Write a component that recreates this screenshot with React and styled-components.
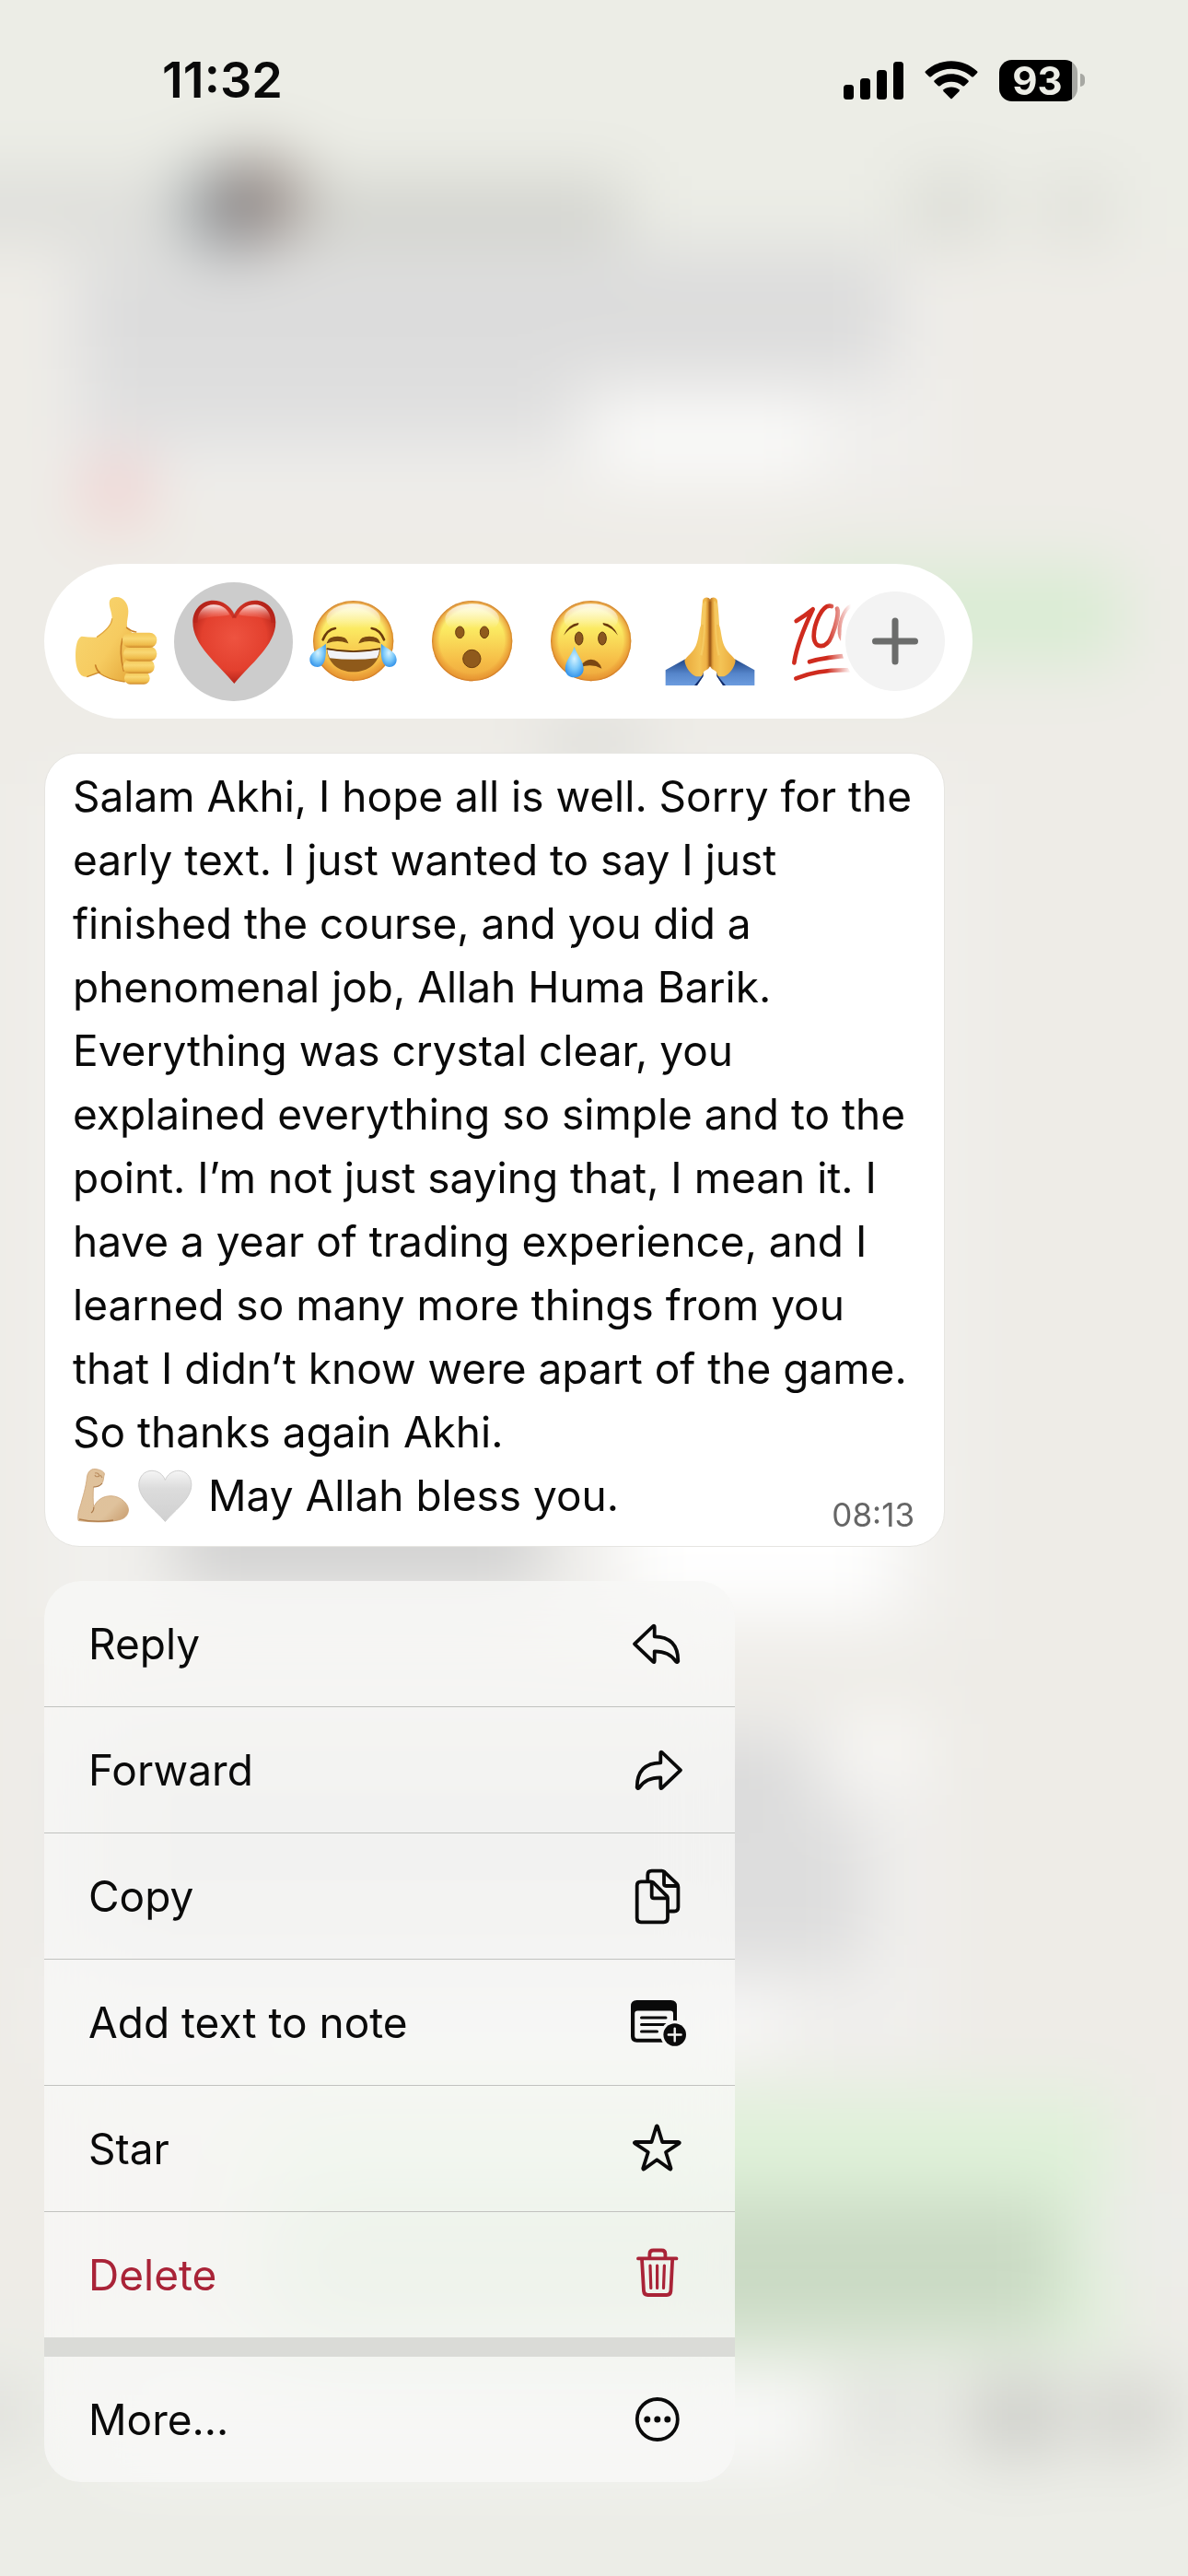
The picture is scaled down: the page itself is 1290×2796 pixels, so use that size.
import styled, { createGlobalStyle } from 'styled-components';

const GlobalStyle = createGlobalStyle`
  * {
    margin: 0;
    padding: 0;
    box-sizing: border-box;
  }

  body {
    background-color: #eeece7;
    font-family: Inter, "Liberation Sans", sans-serif;
    color: #0a0a0a;
  }

  button {
    border: none;
    background: none;
    font: inherit;
    color: inherit;
    cursor: pointer;
  }
`;

const Screen = styled.div`
  position: relative;
  min-height: 100vh;
  overflow: hidden;
`;

const Backdrop = styled.svg`
  position: absolute;
  inset: 0;
  width: 100%;
  height: 100%;
`;

const Content = styled.div`
  position: relative;
  display: flex;
  flex-direction: column;
`;

const StatusBar = styled.header`
  display: flex;
  align-items: center;
  justify-content: space-between;
  height: 174px;
  padding: 0 112px 0 176px;
`;

const Clock = styled.time`
  font-size: 54px;
  font-weight: 600;
  line-height: 64px;
`;

const StatusIcons = styled.div`
  display: flex;
  align-items: center;
  gap: 23px;
`;

const Battery = styled.div`
  display: flex;
  align-items: center;
  gap: 3px;
`;

const BatteryLevel = styled.div`
  width: 85px;
  height: 45px;
  padding-right: 2px;
  border-radius: 14px;
  background: linear-gradient(to right, #000 79px, #a7a8a3 79px);
  color: #ecede6;
  font-size: 42px;
  font-weight: 700;
  line-height: 45px;
  text-align: center;
`;

const BatteryTip = styled.div`
  width: 5px;
  height: 14px;
  border-radius: 0 7px 7px 0;
  background-color: #a7a8a3;
`;

const Main = styled.main`
  display: flex;
  flex-direction: column;
  align-items: flex-start;
  gap: 37px;
  padding: 438px 48px 100px;
`;

const ReactionBar = styled.div`
  position: relative;
  width: 100%;
  max-width: 1008px;
  height: 168px;
  padding: 0 96px 0 12px;
  border-radius: 84px;
  background-color: #fff;
`;

const ReactionStrip = styled.div`
  display: flex;
  align-items: center;
  height: 100%;
  overflow: hidden;
  mask-image: linear-gradient(to left, transparent 36px, #000 62px);
`;

const Reaction = styled.button`
  display: flex;
  align-items: center;
  justify-content: center;
  flex-shrink: 0;
  width: 129px;
  height: 129px;
  border-radius: 50%;
  background-color: ${(props) => (props.$selected ? '#cccccc' : 'transparent')};

  svg {
    width: 96px;
    height: 96px;
    overflow: visible;
  }
`;

const AddReaction = styled.button`
  position: absolute;
  top: 30px;
  right: 30px;
  display: flex;
  align-items: center;
  justify-content: center;
  width: 108px;
  height: 108px;
  border-radius: 50%;
  background-color: #f3f3f3;
  box-shadow: 0 0 0 5px #fff;
`;

const Bubble = styled.article`
  width: 100%;
  max-width: 978px;
  padding: 12px 24px 20px 30px;
  border: 1px solid #e6e5e1;
  border-radius: 38px;
  background-color: #fff;
  font-size: 46px;
  line-height: 69px;
`;

const LastLine = styled.div`
  display: flex;
  align-items: flex-end;
  justify-content: space-between;
  padding-right: 8px;

  svg {
    width: 67px;
    height: 60px;
    vertical-align: -14px;
  }
`;

const SentAt = styled.time`
  color: #666;
  font-size: 35px;
  line-height: 28px;
`;

const Menu = styled.div`
  width: 100%;
  max-width: 750px;
  border-radius: 40px;
  overflow: hidden;
  backdrop-filter: blur(40px) saturate(1.4);
`;

const MenuItem = styled.button`
  display: flex;
  align-items: center;
  justify-content: space-between;
  width: 100%;
  height: ${(props) => (props.$last ? '136px' : '137px')};
  padding: 0 52px 0 48px;
  border-bottom: ${(props) => (props.$last ? 'none' : '1px solid #c1c2bf')};
  background-color: rgba(247, 247, 246, 0.8);
  background-clip: padding-box;
  color: ${(props) => (props.$danger ? '#a92337' : '#0a0a0a')};
  font-size: 46px;
  line-height: 60px;

  svg {
    width: 64px;
    height: 64px;
    fill: none;
    stroke: currentColor;
    stroke-width: 3.8;
    stroke-linecap: round;
    stroke-linejoin: round;
  }
`;

const MenuGap = styled.div`
  height: 21px;
  background-color: #dadbd7;
`;

// the chat behind the menu, out of focus
function BlurredChat() {
  return (
    <Backdrop viewBox="0 0 1290 2796" preserveAspectRatio="none" aria-hidden="true">
      <defs>
        <filter
          id="soft"
          filterUnits="userSpaceOnUse"
          x="-200"
          y="-200"
          width="1690"
          height="3200"
          colorInterpolationFilters="sRGB"
        >
          <feGaussianBlur stdDeviation="36" />
        </filter>
      </defs>
      <rect width="1290" height="2796" fill="#eeece7" />
      <g filter="url(#soft)">
        <rect x="-200" y="-200" width="1690" height="3200" fill="#eeece7" />
        <rect x="-200" y="-200" width="1690" height="470" fill="#ecede6" />
        <rect x="-200" y="2520" width="1690" height="480" fill="#ecede7" />

        <rect x="60" y="295" width="950" height="235" fill="#f0efed" />
        <rect x="85" y="270" width="885" height="140" fill="#dcdcdc" />
        <rect x="85" y="400" width="540" height="85" fill="#dfdfdf" />
        <rect x="650" y="440" width="240" height="75" fill="#fbfbfa" />
        <circle cx="127" cy="532" r="34" fill="#f2c6c6" />

        <rect x="-200" y="195" width="400" height="60" fill="#dbdbd8" />
        <rect x="300" y="200" width="380" height="60" fill="#cecfca" />
        <circle cx="246" cy="225" r="44" fill="#7b8790" />
        <circle cx="282" cy="216" r="42" fill="#82736f" />
        <rect x="990" y="195" width="84" height="62" fill="#d6d7d1" />
        <rect x="1135" y="200" width="66" height="56" fill="#dadad4" />

        <rect x="860" y="615" width="360" height="105" fill="#d9ecd3" />

        <rect x="590" y="790" width="110" height="40" fill="#d4d5d1" />
        <rect x="40" y="850" width="1000" height="930" fill="#f1f0ed" />
        <rect x="190" y="1630" width="400" height="90" fill="#cecece" />
        <rect x="680" y="1590" width="290" height="160" fill="#ffffff" />

        <rect x="50" y="1860" width="970" height="380" fill="#f0efed" />
        <rect x="90" y="1885" width="790" height="90" fill="#dadada" />
        <rect x="90" y="1965" width="850" height="170" fill="#dddddd" />
        <rect x="920" y="1865" width="80" height="60" fill="#faf9f6" />
        <rect x="90" y="2165" width="760" height="60" fill="#f9f9f9" />

        <rect x="280" y="2275" width="930" height="275" fill="#dff1d9" />
        <rect x="300" y="2385" width="850" height="150" fill="#cadac4" />
        <rect x="1190" y="2380" width="200" height="90" fill="#ecede9" />

        <rect x="-60" y="2590" width="90" height="60" fill="#dcdcd8" />
        <rect x="120" y="2585" width="765" height="85" fill="#fafafa" />
        <rect x="925" y="2590" width="70" height="50" fill="#dcdddb" />
        <rect x="1055" y="2585" width="96" height="76" fill="#c8c9c4" />
        <rect x="1180" y="2585" width="90" height="72" fill="#d0d0cb" />
      </g>
    </Backdrop>
  );
}

function EmojiPaints() {
  return (
    <svg width="0" height="0" style={{ position: 'absolute' }} aria-hidden="true">
      <defs>
        <linearGradient id="faceBase" x1="0" y1="0" x2="0" y2="1">
          <stop offset="0" stopColor="#fdf6a0" />
          <stop offset="0.35" stopColor="#fbea62" />
          <stop offset="0.75" stopColor="#f6bd47" />
          <stop offset="1" stopColor="#eda63c" />
        </linearGradient>
        <radialGradient id="faceRim">
          <stop offset="0.8" stopColor="#e68a2e" stopOpacity="0" />
          <stop offset="0.95" stopColor="#e5912f" stopOpacity="0.7" />
          <stop offset="1" stopColor="#c96f22" stopOpacity="0.9" />
        </radialGradient>
        <linearGradient id="faceShine" x1="0" y1="0" x2="0" y2="1">
          <stop offset="0" stopColor="#fff" stopOpacity="0.85" />
          <stop offset="0.8" stopColor="#fff" stopOpacity="0" />
        </linearGradient>
        <radialGradient id="redHeart" cx="0.5" cy="0.45" r="0.6">
          <stop offset="0" stopColor="#ee5340" />
          <stop offset="0.65" stopColor="#e3402e" />
          <stop offset="1" stopColor="#a61c14" />
        </radialGradient>
        <linearGradient id="heartShine" x1="0" y1="0" x2="0" y2="1">
          <stop offset="0" stopColor="#fff" stopOpacity="0.9" />
          <stop offset="1" stopColor="#f37060" stopOpacity="0" />
        </linearGradient>
        <linearGradient id="greyHeart" x1="0" y1="0" x2="0" y2="1">
          <stop offset="0" stopColor="#f5f5f5" />
          <stop offset="0.35" stopColor="#dcdcdc" />
          <stop offset="1" stopColor="#d0d0d0" />
        </linearGradient>
        <linearGradient id="skin" x1="0" y1="0" x2="1" y2="1">
          <stop offset="0" stopColor="#f8d873" />
          <stop offset="0.6" stopColor="#f6cb60" />
          <stop offset="1" stopColor="#e5a73a" />
        </linearGradient>
        <linearGradient id="finger" x1="0" y1="0" x2="0" y2="1">
          <stop offset="0" stopColor="#f3c453" />
          <stop offset="0.4" stopColor="#f9d873" />
          <stop offset="0.8" stopColor="#efbb4a" />
          <stop offset="1" stopColor="#cf8a2c" />
        </linearGradient>
        <linearGradient id="hand" x1="0" y1="0" x2="1" y2="0">
          <stop offset="0" stopColor="#e9a93c" />
          <stop offset="0.6" stopColor="#f4c456" />
          <stop offset="0.85" stopColor="#eeb246" />
          <stop offset="1" stopColor="#b8701f" />
        </linearGradient>
        <linearGradient id="sleeve" x1="0" y1="0" x2="0" y2="1">
          <stop offset="0" stopColor="#1f4485" />
          <stop offset="0.55" stopColor="#5585ca" />
          <stop offset="1" stopColor="#6c9cdf" />
        </linearGradient>
        <radialGradient id="tear" cx="0.5" cy="0.4" r="0.65">
          <stop offset="0" stopColor="#d4f2ff" />
          <stop offset="0.5" stopColor="#7fcbfa" />
          <stop offset="1" stopColor="#2c8de8" />
        </radialGradient>
        <linearGradient id="arm" x1="0" y1="0" x2="1" y2="1">
          <stop offset="0" stopColor="#e0c19a" />
          <stop offset="0.7" stopColor="#dfc29c" />
          <stop offset="1" stopColor="#c79a6b" />
        </linearGradient>
      </defs>
    </svg>
  );
}

function Face({ children }) {
  return (
    <svg viewBox="0 0 288 288" aria-hidden="true">
      <circle cx="146" cy="143" r="131" fill="url(#faceBase)" />
      <circle cx="146" cy="143" r="131" fill="url(#faceRim)" />
      <ellipse cx="146" cy="72" rx="88" ry="50" fill="url(#faceShine)" />
      {children}
    </svg>
  );
}

const ThumbsUp = () => (
  <svg viewBox="0 0 288 288" aria-hidden="true">
    <path
      d="M35 128 Q62 132 84 131 C112 112 134 92 134 70 C134 48 120 26 127 10 Q134 0 148 0 C172 0 187 22 187 46 C187 68 180 82 184 100 L200 118 V272 Q190 278 176 276 C138 272 112 262 90 246 L52 260 C26 262 15 230 15 192 C15 160 20 134 35 128 Z"
      fill="url(#skin)"
    />
    <path d="M176 276 C138 272 112 262 90 246 L52 260" fill="none" stroke="#d08d2e" strokeWidth="4" />
    <path d="M84 131 C112 112 134 92 134 70" fill="none" stroke="#e0a53e" strokeWidth="4" />
    <path d="M182 100 Q196 112 212 114 M168 136 Q156 180 172 240 M80 222 Q84 240 94 246" fill="none" stroke="#c98128" strokeWidth="5" strokeLinecap="round" />
    <rect x="174" y="244" width="83" height="40" rx="19" fill="url(#finger)" />
    <rect x="170" y="204" width="102" height="45" rx="21" fill="url(#finger)" />
    <rect x="171" y="161" width="109" height="48" rx="23" fill="url(#finger)" />
    <rect x="168" y="116" width="112" height="49" rx="24" fill="url(#finger)" />
  </svg>
);

const RedHeart = () => (
  <svg viewBox="0 0 288 288" aria-hidden="true">
    <path
      d="M145 59 C134 28 106 11 77 11 C38 11 10 42 10 82 C10 158 92 218 145 282 C198 218 280 158 280 82 C280 42 252 11 213 11 C184 11 156 28 145 59 Z"
      fill="url(#redHeart)"
    />
    <path
      d="M145 68 C134 38 108 20 78 20 C44 20 19 46 19 84"
      fill="none"
      stroke="#b3221a"
      strokeWidth="12"
      strokeOpacity="0.5"
    />
    <path
      d="M145 68 C156 38 182 20 212 20 C246 20 271 46 271 84"
      fill="none"
      stroke="#b3221a"
      strokeWidth="12"
      strokeOpacity="0.5"
    />
    <path d="M26 78 C26 46 50 25 78 25 C104 25 122 38 130 58 C108 66 60 60 26 78 Z" fill="url(#heartShine)" />
    <path d="M264 78 C264 46 240 25 212 25 C186 25 168 38 160 58 C182 66 230 60 264 78 Z" fill="url(#heartShine)" />
  </svg>
);

const TearsOfJoy = () => (
  <Face>
    <g fill="none" stroke="#6b3a0c" strokeLinecap="round">
      <path d="M47 139 Q60 106 87 102" strokeWidth="8" />
      <path d="M246 139 Q233 106 206 102" strokeWidth="8" />
    </g>
    <path d="M62 148 Q66 130 95 130 Q122 130 127 148 Q95 136 62 148 Z" fill="#7a4a12" stroke="#7a4a12" strokeWidth="4" />
    <path d="M166 148 Q171 130 198 130 Q227 130 231 148 Q198 136 166 148 Z" fill="#7a4a12" stroke="#7a4a12" strokeWidth="4" />
    <path d="M59 168 Q146 186 234 168 C230 216 194 244 146 244 C98 244 64 216 59 168 Z" fill="#8f5a1a" />
    <path d="M61 172 Q146 188 231 172 Q230 188 223 199 Q146 208 69 199 Q62 186 61 172 Z" fill="#f2f2f6" />
    <path d="M59 168 Q146 186 234 168" fill="none" stroke="#5b2f08" strokeWidth="5" />
    <path d="M56 152 C40 168 4 176 4 204 C4 220 16 228 29 228 C58 226 58 184 56 152 Z" fill="url(#tear)" />
    <path d="M237 152 C253 168 287 176 287 204 C287 220 276 228 264 228 C235 226 235 184 237 152 Z" fill="url(#tear)" />
  </Face>
);

const OpenMouth = () => (
  <Face>
    <g fill="#8f5a1c" stroke="#6b3d0e" strokeWidth="3">
      <ellipse cx="106" cy="115" rx="14" ry="19" />
      <ellipse cx="186" cy="115" rx="14" ry="19" />
      <circle cx="145" cy="201" r="29" />
    </g>
  </Face>
);

const Crying = () => (
  <Face>
    <path d="M57 125 Q72 88 106 84 Q107 90 102 92 Q78 98 57 125 Z" fill="#6b3a0c" />
    <path d="M234 125 Q219 88 185 84 Q184 90 189 92 Q213 98 234 125 Z" fill="#6b3a0c" />
    <g fill="#8a5620" stroke="#5f360c" strokeWidth="3">
      <ellipse cx="107" cy="135" rx="13" ry="21" />
      <ellipse cx="183" cy="135" rx="13" ry="21" />
    </g>
    <path d="M112 224 Q128 203 146 203 Q172 204 181 233 Q150 216 112 228 Z" fill="#7a4612" />
    <path d="M92 161 C86 186 62 206 62 234 C62 252 76 262 92 262 C108 262 122 252 122 234 C122 206 98 186 92 161 Z" fill="url(#tear)" />
  </Face>
);

const Prayer = () => (
  <svg viewBox="0 0 288 288" aria-hidden="true">
    {[null, 'translate(294 0) scale(-1 1)'].map((flip) => (
      <g key={flip || 'left'} transform={flip || undefined}>
        <path d="M2 238 L67 202 L88 246 L123 246 L124 258 L105 288 H2 Z" fill="url(#sleeve)" />
        <path d="M118 262 L125 244 V258 L105 288 H96 Z" fill="#122c6b" />
        <path
          d="M147 8 C143 -2 124 0 123 12 L119 58 L117 92 C110 110 111 134 101 158 C92 180 72 192 64 206 C66 228 84 252 102 259 L118 259 C126 254 122 244 132 239 Q144 234 147 226 Z"
          fill="url(#hand)"
        />
        <path d="M127 20 L122 90 M132 14 C126 80 134 130 118 190" fill="none" stroke="#f9d873" strokeWidth="7" strokeOpacity="0.5" />
        <path d="M145 14 V226" stroke="#a3601c" strokeWidth="4" />
      </g>
    ))}
  </svg>
);

const Hundred = () => (
  <svg viewBox="0 0 288 288" aria-hidden="true">
    <g fill="none" stroke="#cf2b1e" strokeLinecap="round" strokeLinejoin="round">
      <path d="M41 78 Q68 62 95 40 C74 84 42 160 34 214" strokeWidth="14" />
      <path d="M156 30 C124 20 98 92 98 128 C100 172 140 168 156 128 C172 88 180 50 174 38" strokeWidth="14" />
      <path d="M236 28 C204 18 180 76 182 118 C186 156 222 152 238 114 C252 74 256 34 236 28 Z" strokeWidth="12" />
      <path d="M84 211 Q138 194 226 190" strokeWidth="14" />
      <path d="M40 265 Q110 236 214 238" strokeWidth="14" />
    </g>
  </svg>
);

const FlexedArm = () => (
  <svg viewBox="0 0 67 60" role="img" aria-label="flexed biceps">
    <path
      d="M15.5 9 C16 4 20 0 24 0.4 C30 1 34.5 3.5 34.4 6 C33 10 34 14 31 17 Q27 20 22.5 20 C22 28 22 36 22.8 42 C26 34 33 29.5 42 29.7 C52 30 60.5 38 60.5 45 C60 52 55 55 49 56 C36 59 18 58 6 56.5 C5 50 7 44 9 38 C11 30 14 22 15.5 9 Z"
      fill="url(#arm)"
      stroke="#cda376"
      strokeWidth="0.8"
    />
    <path d="M22.5 20 Q29 20 32 16 M22.8 42 Q23 46 20 48" fill="none" stroke="#a97848" strokeWidth="1.2" />
    <path d="M24 5 q4 -1 5 3 q-4 2 -5 -1 M30 7 l2 3" fill="none" stroke="#b98c5f" strokeWidth="1.1" />
    <path d="M7 55 Q24 59 44 56" fill="none" stroke="#b3804e" strokeWidth="1.4" />
  </svg>
);

const WhiteHeart = () => (
  <svg viewBox="0 0 67 60" role="img" aria-label="white heart">
    <path
      d="M33.4 12.5 C31 6 25 2.3 19 2.3 C10.5 2.3 4.8 9 4.8 17.5 C4.8 33 22 44 33.4 57.5 C44.8 44 61.8 33 61.8 17.5 C61.8 9 56 2.3 47.8 2.3 C41.8 2.3 35.8 6 33.4 12.5 Z"
      fill="url(#greyHeart)"
      stroke="#cfcfcf"
      strokeWidth="1"
    />
  </svg>
);

const ReplyIcon = () => (
  <svg viewBox="0 0 64 64" aria-hidden="true">
    <path d="M7 32.3 L27.2 13 Q28.7 12 28.7 14 V24.3 C45 24.3 54.3 33 54.3 51 Q53.5 53 52 51.5 C47 43.5 40 40.3 28.7 40.3 V50.8 Q28.7 52.8 27.2 51.7 Z" />
  </svg>
);

const ForwardIcon = () => (
  <svg viewBox="0 0 64 64" aria-hidden="true">
    <path d="M57 32.3 L36.8 13 Q35.3 12 35.3 14 V24.3 C19 24.3 9.7 33 9.7 51 Q10.5 53 12 51.5 C17 43.5 24 40.3 35.3 40.3 V50.8 Q35.3 52.8 36.8 51.7 Z" />
  </svg>
);

const CopyIcon = () => (
  <svg viewBox="0 0 64 64" aria-hidden="true">
    <path d="M14 16.3 H24.5 Q26.3 16.3 27.6 17.5 L42 31.8 Q43 33 43 34.5 V56 Q43 60.3 38.7 60.3 H14 Q9.7 60.3 9.7 56 V20.6 Q9.7 16.3 14 16.3 Z" />
    <path d="M25.7 17 V32 Q25.7 34.3 28 34.3 H42.6" />
    <path d="M21.3 14.5 V9 Q21.3 4.7 25.6 4.7 H36.6 Q38.2 4.7 39.5 5.8 L53 18.6 Q54.4 20 54.4 22 V44 Q54.4 48.5 50 48.5 H45.5" />
    <path d="M39 6 V18.8 Q39 21 41.2 21 H54" />
  </svg>
);

const NoteIcon = () => (
  <svg viewBox="0 0 64 64" aria-hidden="true">
    <mask id="noteCut" maskUnits="userSpaceOnUse" x="0" y="0" width="64" height="64">
      <rect width="64" height="64" fill="#fff" stroke="none" />
      <circle cx="50.7" cy="45.5" r="15.5" fill="#000" stroke="none" />
    </mask>
    <g mask="url(#noteCut)">
      <path
        d="M9.5 8 H46.5 Q53 8 53 14.5 V47.3 Q53 53.8 46.5 53.8 H9.5 Q3 53.8 3 47.3 V14.5 Q3 8 9.5 8 Z M10.3 19.5 Q7.2 19.5 7.2 22.6 V46.7 Q7.2 49.8 10.3 49.8 H46 Q49 49.8 49 46.7 V22.6 Q49 19.5 46 19.5 Z"
        fill="currentColor"
        fillRule="evenodd"
        stroke="none"
      />
      <path d="M14.5 27 H41 M14.5 34.5 H41 M14.5 42 H31.5" strokeWidth="3" />
    </g>
    <circle cx="50.7" cy="45.5" r="12.3" fill="currentColor" stroke="none" />
    <path d="M43.8 45.5 H57.6 M50.7 38.6 V52.4" stroke="#f3f3f1" strokeWidth="2.4" />
  </svg>
);

const StarIcon = () => (
  <svg viewBox="0 0 64 64" aria-hidden="true">
    <path d="M30.7 8 Q31.3 6.6 32 8 L37.2 25 H55 Q56.5 25.3 55.4 26.3 L41 36 L46.5 53.6 Q46.5 55 45.2 54.2 L31.3 44.3 L17.5 54.2 Q16.2 55 16.2 53.6 L21.8 36 L7.3 26.3 Q6.2 25.3 7.7 25 H25.5 Z" />
  </svg>
);

const TrashIcon = () => (
  <svg viewBox="0 0 64 64" aria-hidden="true">
    <path d="M11 14.4 H52.5 M23.4 14 V9.5 Q23.4 5.5 27.4 5.5 H36.4 Q40.4 5.5 40.4 9.5 V14" />
    <path d="M15 15 L17 49.8 Q17.4 54 21.5 54 H42 Q46 54 46.4 49.8 L48.2 15" />
    <path d="M24 22 L24.8 46.5 M31.6 22 V46.5 M39.4 22 L38.5 46.5" strokeWidth="3.2" />
  </svg>
);

const MoreIcon = () => (
  <svg viewBox="0 0 64 64" aria-hidden="true">
    <circle cx="31.8" cy="32" r="22" />
    <g fill="currentColor" stroke="none">
      <circle cx="20.8" cy="32" r="3.5" />
      <circle cx="31.8" cy="32" r="3.5" />
      <circle cx="42.8" cy="32" r="3.5" />
    </g>
  </svg>
);

const reactions = [
  { name: 'Thumbs up', Icon: ThumbsUp },
  { name: 'Red heart', Icon: RedHeart, selected: true },
  { name: 'Tears of joy', Icon: TearsOfJoy },
  { name: 'Surprised', Icon: OpenMouth },
  { name: 'Crying', Icon: Crying },
  { name: 'Folded hands', Icon: Prayer },
  { name: 'Hundred points', Icon: Hundred },
];

const messageLines = [
  'Salam Akhi, I hope all is well. Sorry for the',
  'early text. I just wanted to say I just',
  'finished the course, and you did a',
  'phenomenal job, Allah Huma Barik.',
  'Everything was crystal clear, you',
  'explained everything so simple and to the',
  'point. I’m not just saying that, I mean it. I',
  'have a year of trading experience, and I',
  'learned so many more things from you',
  'that I didn’t know were apart of the game.',
  'So thanks again Akhi.',
];

const actions = [
  { label: 'Reply', Icon: ReplyIcon },
  { label: 'Forward', Icon: ForwardIcon },
  { label: 'Copy', Icon: CopyIcon },
  { label: 'Add text to note', Icon: NoteIcon },
  { label: 'Star', Icon: StarIcon },
];

function App() {
  return (
    <>
      <GlobalStyle />
      <EmojiPaints />
      <Screen>
        <BlurredChat />
        <Content>
          <StatusBar>
            <Clock>11:32</Clock>
            <StatusIcons>
              <svg width="65" height="41" viewBox="0 0 65 41" aria-label="Signal">
                <rect x="0" y="25" width="11" height="16" rx="3.5" />
                <rect x="18" y="18" width="11" height="23" rx="3.5" />
                <rect x="36" y="9" width="11" height="32" rx="3.5" />
                <rect x="54" y="0" width="11" height="41" rx="3.5" />
              </svg>
              <svg width="58" height="42" viewBox="0 0 58 42" aria-label="Wi-Fi">
                <path d="M1 11.3 C17 -3.6 41 -3.6 57 11.3 Q58 12.3 57 13.3 L53 17.2 Q52 18 51 17.2 C38.5 5.8 19.5 5.8 7 17.2 Q6 18 5 17.2 L1 13.3 Q0 12.3 1 11.3 Z" />
                <path d="M10.7 21.2 C21 12 37 12 47.3 21.2 Q48.3 22.2 47.3 23.2 L43.2 27.2 Q42.2 28 41.2 27.2 C34.5 21.4 23.5 21.4 16.8 27.2 Q15.8 28 14.8 27.2 L10.7 23.2 Q9.7 22.2 10.7 21.2 Z" />
                <path d="M20.6 31.2 C25 27.6 33 27.6 37.4 31.2 Q38.3 32.2 37.4 33.2 L30 40.7 Q29 41.7 28 40.7 L20.6 33.2 Q19.7 32.2 20.6 31.2 Z" />
              </svg>
              <Battery>
                <BatteryLevel>93</BatteryLevel>
                <BatteryTip />
              </Battery>
            </StatusIcons>
          </StatusBar>

          <Main>
            <ReactionBar>
              <ReactionStrip>
                {reactions.map(({ name, Icon, selected }) => (
                  <Reaction key={name} type="button" aria-label={name} $selected={selected}>
                    <Icon />
                  </Reaction>
                ))}
              </ReactionStrip>
              <AddReaction type="button" aria-label="More reactions">
                <svg width="50" height="52" viewBox="0 0 50 52" aria-hidden="true">
                  <path d="M3.5 26 H46.5 M25 4 V48" stroke="#6b6c6b" strokeWidth="7" strokeLinecap="round" />
                </svg>
              </AddReaction>
            </ReactionBar>

            <Bubble>
              {messageLines.map((line) => (
                <p key={line}>{line}</p>
              ))}
              <LastLine>
                <p>
                  <FlexedArm />
                  <WhiteHeart /> May Allah bless you.
                </p>
                <SentAt>08:13</SentAt>
              </LastLine>
            </Bubble>

            <Menu>
              {actions.map(({ label, Icon }) => (
                <MenuItem key={label} type="button">
                  {label}
                  <Icon />
                </MenuItem>
              ))}
              <MenuItem type="button" $danger $last>
                Delete
                <TrashIcon />
              </MenuItem>
              <MenuGap />
              <MenuItem type="button" $last>
                More...
                <MoreIcon />
              </MenuItem>
            </Menu>
          </Main>
        </Content>
      </Screen>
    </>
  );
}

export default App;
